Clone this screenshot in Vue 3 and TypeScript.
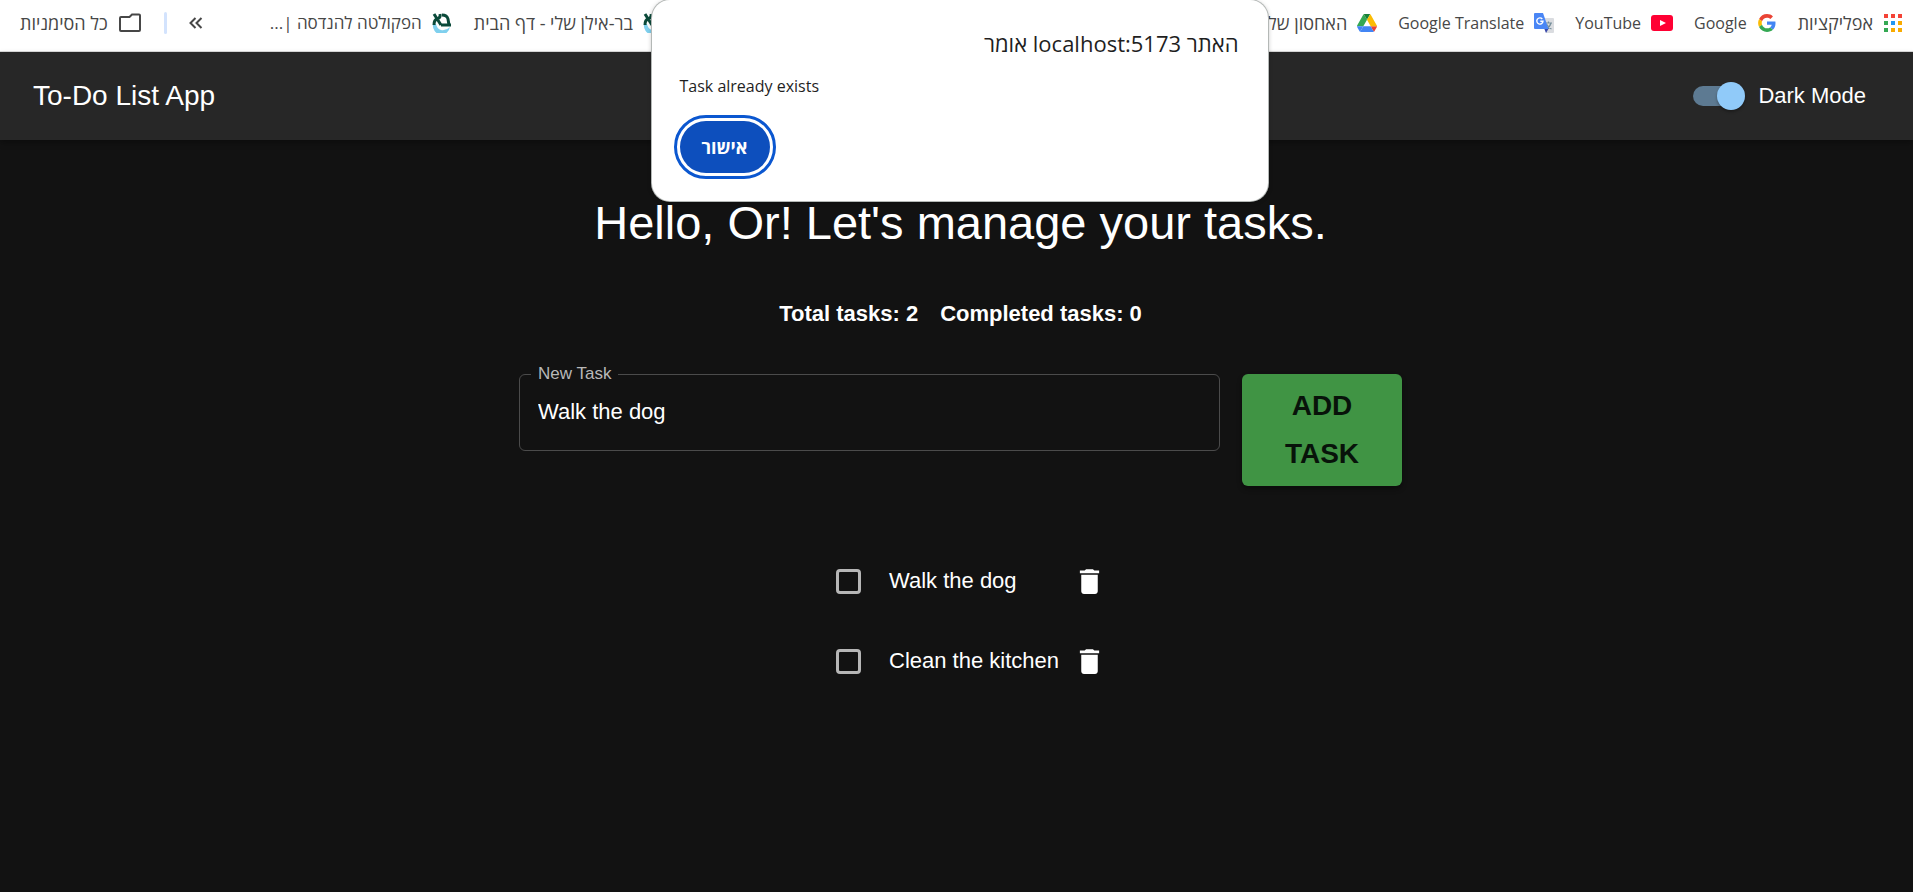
<script setup lang="ts">
import { computed, ref } from 'vue'

interface Bookmark {
  label: string
  icon: 'apps' | 'google' | 'youtube' | 'translate' | 'drive' | 'biu'
  size?: 'hebrew' | 'long'
}

interface Task {
  id: number
  title: string
  done: boolean
}

const pinned: Bookmark[] = [
  { label: 'אפליקציות', icon: 'apps', size: 'hebrew' },
  { label: 'Google', icon: 'google' },
  { label: 'YouTube', icon: 'youtube' },
  { label: 'Google Translate', icon: 'translate' },
  { label: 'האחסון שלי', icon: 'drive', size: 'hebrew' },
]

const university: Bookmark[] = [
  { label: 'בר-אילן שלי - דף הבית', icon: 'biu', size: 'hebrew' },
  { label: 'הפקולטה להנדסה |...', icon: 'biu', size: 'long' },
]

const groups = [pinned, university]

const appCells = ['#f44336', '#f44336', '#f44336', '#34a853', '#2196f3', '#f9ab00', '#34a853', '#f9ab00', '#f9ab00']

const darkMode = ref(true)
const newTask = ref('Walk the dog')
const alertOpen = ref(true)
const tasks = ref<Task[]>([
  { id: 1, title: 'Walk the dog', done: false },
  { id: 2, title: 'Clean the kitchen', done: false },
])

const completed = computed(() => tasks.value.filter((t) => t.done).length)

function addTask() {
  const title = newTask.value.trim()
  if (!title) return
  if (tasks.value.some((t) => t.title === title)) {
    alertOpen.value = true
    return
  }
  tasks.value.push({ id: Date.now(), title, done: false })
  newTask.value = ''
}

function removeTask(id: number) {
  tasks.value = tasks.value.filter((t) => t.id !== id)
}
</script>

<template>
  <div class="screen">
    <nav class="bookmarks" dir="rtl">
      <template v-for="(group, g) in groups" :key="g">
        <div class="group">
          <a v-for="b in group" :key="b.label" class="bookmark" :class="b.size" href="#">
            <svg v-if="b.icon === 'apps'" class="icon" viewBox="0 0 20 20">
              <rect
                v-for="(c, i) in appCells"
                :key="i"
                :x="1 + (i % 3) * 7"
                :y="1 + Math.floor(i / 3) * 7"
                width="4"
                height="4"
                :fill="c"
              />
            </svg>
            <svg v-else-if="b.icon === 'google'" class="icon" viewBox="-3 -3 54 54">
              <path fill="#ea4335" d="M24 9.5c3.54 0 6.71 1.22 9.21 3.6l6.85-6.85C35.9 2.38 30.47 0 24 0 14.62 0 6.51 5.38 2.56 13.22l7.98 6.19C12.43 13.72 17.74 9.5 24 9.5z" />
              <path fill="#4285f4" d="M46.98 24.55c0-1.57-.15-3.09-.38-4.55H24v9.02h12.94c-.58 2.96-2.26 5.48-4.78 7.18l7.73 6c4.51-4.18 7.09-10.36 7.09-17.65z" />
              <path fill="#fbbc05" d="M10.53 28.59c-.48-1.45-.76-2.99-.76-4.59s.27-3.14.76-4.59l-7.98-6.19C.92 16.46 0 20.12 0 24c0 3.88.92 7.54 2.56 10.78l7.97-6.19z" />
              <path fill="#34a853" d="M24 48c6.48 0 11.93-2.13 15.89-5.81l-7.73-6c-2.15 1.45-4.92 2.3-8.16 2.3-6.26 0-11.57-4.22-13.47-9.91l-7.98 6.19C6.51 42.62 14.62 48 24 48z" />
            </svg>
            <svg v-else-if="b.icon === 'youtube'" class="icon wide" viewBox="0 0 22 20">
              <rect y="2" width="22" height="16" rx="3" fill="#ff0033" />
              <path d="M9 7v6l6-3z" fill="#fff" />
            </svg>
            <svg v-else-if="b.icon === 'translate'" class="icon" viewBox="0 0 20 20">
              <path d="M8 5h11q1 0 1 1v13q0 1-1 1h-7z" fill="#dadce0" />
              <path d="M11 10h7M14.500 8.500v1.500M17 10q-1 4-5 6M13 11.500q1 3 4.500 4.500" fill="none" stroke="#78909c" stroke-width="1.200" />
              <path d="M10 15h5l-3 5z" fill="#3949ab" />
              <path d="M1 0h8l5.500 16H1q-1 0-1-1V1q0-1 1-1z" fill="#4a86f5" />
              <path d="M8.300 6A3.100 3.100 0 1 0 9 8.300H6.300" fill="none" stroke="#fff" stroke-width="1.400" />
            </svg>
            <svg v-else-if="b.icon === 'drive'" class="icon" viewBox="0 0 87.3 78">
              <path d="M43.650 25 29.900 1.200c-1.350.8-2.500 1.900-3.300 3.300L1.200 48.500C.4 49.900 0 51.450 0 53h27.500z" fill="#34a853" />
              <path d="M73.550 76.800c1.350-.8 2.500-1.900 3.300-3.300l1.600-2.750L86.100 57.500c.8-1.400 1.200-2.950 1.200-4.500H59.800l5.850 11.500z" fill="#ea4335" />
              <path d="M43.650 25 57.400 1.200C56.050.4 54.500 0 52.900 0H34.400c-1.600 0-3.150.45-4.500 1.200z" fill="#188038" />
              <path d="m6.600 66.850 3.850 6.650c.8 1.400 1.950 2.500 3.300 3.300L27.500 53H0c0 1.550.4 3.100 1.200 4.500z" fill="#4285f4" />
              <path d="M59.800 53H27.500L13.750 76.800c1.350.8 2.900 1.200 4.500 1.200h50.800c1.600 0 3.150-.45 4.500-1.200z" fill="#4285f4" />
              <path d="M73.400 26.500 60.700 4.500c-.8-1.400-1.950-2.500-3.300-3.300L43.650 25 59.800 53h27.450c0-1.550-.4-3.100-1.200-4.500z" fill="#fbbc04" />
            </svg>
            <svg v-else class="icon" viewBox="0 0 20 20">
              <path d="M1 11a8.500 9 0 0 0 17 3q-4 4-9 3-4-1-5-6z" fill="#7fd0ee" />
              <path d="M2 1l7 11M8 1q1 4-3 5-3 1-3 6M10 2q5 0 6 4l1 6M9 12h10" fill="none" stroke="#0b4a3a" stroke-width="3" />
            </svg>
            <span>{{ b.label }}</span>
          </a>
          <template v-if="g === 1">
            <button class="more" type="button" aria-label="עוד סימניות">
              <svg viewBox="0 0 14 12">
                <path d="M6.500 1l-5 5 5 5M12.500 1l-5 5 5 5" fill="none" stroke="#474747" stroke-width="2" />
              </svg>
            </button>
            <span class="divider"></span>
            <a class="bookmark hebrew" href="#">
              <svg class="folder" viewBox="0 0 24 20">
                <path d="M2 17V5q0-1 1-1h8.500l2.500-2.500h7q1 0 1 1V17q0 1-1 1H3q-1 0-1-1z" fill="none" stroke="#474747" stroke-width="2" />
              </svg>
              <span>כל הסימניות</span>
            </a>
          </template>
        </div>
      </template>
    </nav>

    <header class="app-bar">
      <h1>To-Do List App</h1>
      <label class="mode">
        <input v-model="darkMode" class="switch" type="checkbox" role="switch" />
        <span>Dark Mode</span>
      </label>
    </header>

    <main class="content">
      <h2>Hello, Or! Let's manage your tasks.</h2>
      <div class="stats">
        <span>Total tasks: {{ tasks.length }}</span>
        <span>Completed tasks: {{ completed }}</span>
      </div>

      <form class="entry" @submit.prevent="addTask">
        <fieldset class="field">
          <legend><label for="new-task">New Task</label></legend>
          <input id="new-task" v-model="newTask" type="text" autocomplete="off" />
        </fieldset>
        <button class="add" type="submit">Add Task</button>
      </form>

      <ul class="tasks">
        <li v-for="t in tasks" :key="t.id">
          <input :id="`task-${t.id}`" v-model="t.done" class="tick" type="checkbox" />
          <label :for="`task-${t.id}`">{{ t.title }}</label>
          <button class="remove" type="button" :aria-label="`Delete ${t.title}`" @click="removeTask(t.id)">
            <svg viewBox="0 0 24 24">
              <path d="M6 19c0 1.100.9 2 2 2h8c1.100 0 2-.9 2-2V7H6zM19 4h-3.500l-1-1h-5l-1 1H5v2h14z" fill="#fff" />
            </svg>
          </button>
        </li>
      </ul>
    </main>

    <div v-if="alertOpen" class="overlay">
      <section class="alert" dir="rtl" role="alertdialog" aria-labelledby="alert-title" aria-describedby="alert-text">
        <h3 id="alert-title">האתר localhost:5173 אומר</h3>
        <p id="alert-text" dir="ltr">Task already exists</p>
        <button class="ok" type="button" @click="alertOpen = false">אישור</button>
      </section>
    </div>
  </div>
</template>

<style>
body {
  margin: 0;
  background: #121212;
}
</style>

<style scoped>
.screen {
  position: relative;
  min-height: 100vh;
  background: #121212;
  color: #fff;
  font-family: 'Liberation Sans', Arial, sans-serif;
  font-size: 22px;
  line-height: 32px;
}

.bookmarks {
  display: flex;
  justify-content: space-between;
  box-sizing: border-box;
  height: 52px;
  padding: 0 10px 6px 20px;
  overflow: hidden;
  border-bottom: 1px solid #dcdcdc;
  background: #fff;
  font-family: 'Open Sans', 'Noto Sans', sans-serif;
  font-size: 16px;
  line-height: 24px;
  white-space: nowrap;
}

.group {
  display: flex;
  align-items: center;
  gap: 22px;
}

.group:first-child {
  gap: 21px;
}

.bookmark {
  display: flex;
  align-items: center;
  gap: 10px;
  color: #474747;
  text-decoration: none;
}

.hebrew {
  font-size: 18px;
}

.long {
  font-size: 17px;
}

.icon {
  flex: none;
  width: 20px;
  height: 20px;
}

.wide {
  width: 22px;
}

.folder {
  flex: none;
  width: 24px;
  height: 20px;
}

.more {
  display: flex;
  margin: 0 45px 0 0;
  padding: 0;
  border: 0;
  background: none;
}

.more svg {
  width: 14px;
  height: 12px;
}

.divider {
  width: 3px;
  height: 22px;
  border-radius: 2px;
  background: #d3e3fd;
}

.app-bar {
  display: flex;
  align-items: center;
  justify-content: space-between;
  height: 88px;
  padding: 0 47px 0 33px;
  background: #272727;
  box-shadow: 0 3px 6px rgba(0, 0, 0, 0.3);
}

h1 {
  margin: 0;
  font-size: 28px;
  font-weight: 400;
  line-height: 44px;
}

.mode {
  display: flex;
  align-items: center;
  gap: 18px;
}

.switch {
  display: flex;
  align-items: center;
  justify-content: flex-end;
  width: 47px;
  height: 20px;
  margin: 0;
  appearance: none;
  border-radius: 10px;
  background: #5d7a92;
}

.switch::before {
  content: '';
  flex: none;
  width: 28px;
  height: 28px;
  margin-right: -5px;
  border-radius: 50%;
  background: #90caf9;
  box-shadow: 0 2px 3px rgba(0, 0, 0, 0.3);
}

.switch:not(:checked) {
  justify-content: flex-start;
}

.content {
  display: flex;
  flex-direction: column;
  align-items: center;
  padding: 55px 0 0 8px;
}

h2 {
  margin: 0;
  font-size: 47px;
  font-weight: 400;
  line-height: 56px;
}

.stats {
  display: flex;
  gap: 22px;
  margin-top: 47px;
  font-weight: 700;
}

.entry {
  display: flex;
  align-items: flex-start;
  gap: 22px;
  width: 100%;
  max-width: 883px;
  margin-top: 35px;
}

.field {
  flex: 1;
  box-sizing: border-box;
  min-width: 0;
  height: 86px;
  margin: 0;
  padding: 0 18px;
  border: 1px solid #4b4b4b;
  border-radius: 6px;
}

.field legend {
  margin-left: -7px;
  padding: 0 7px;
  color: #b8b8b8;
  font-size: 17px;
  line-height: 18px;
}

.field legend label {
  display: block;
}

.field input {
  display: block;
  width: 100%;
  padding: 13px 0;
  border: 0;
  outline: 0;
  background: none;
  color: #fff;
  font: inherit;
}

.add {
  width: 160px;
  margin-top: 9px;
  padding: 8px 30px;
  border: 0;
  border-radius: 6px;
  background: #409444;
  box-shadow: 0 3px 5px rgba(0, 0, 0, 0.4);
  color: #08130a;
  font-family: inherit;
  font-size: 28px;
  font-weight: 700;
  line-height: 48px;
  text-transform: uppercase;
}

.tasks {
  display: flex;
  flex-direction: column;
  margin: 55px 0 0;
  padding: 0;
  list-style: none;
}

.tasks li {
  display: flex;
  align-items: center;
  height: 80px;
  padding: 0 18px 0 39px;
}

.tasks label {
  flex: 1;
  padding: 0 14px 0 28px;
}

.tick {
  width: 25px;
  height: 25px;
  margin: 0;
  border: 3px solid #b6b6b6;
  border-radius: 4px;
  appearance: none;
}

.tick:checked {
  background: #90caf9;
}

.remove {
  display: flex;
  padding: 0;
  border: 0;
  background: none;
}

.remove svg {
  width: 33px;
  height: 33px;
}

.overlay {
  position: absolute;
  top: 0;
  left: 6px;
  right: 0;
  display: flex;
  justify-content: center;
}

.alert {
  display: flex;
  flex-direction: column;
  box-sizing: border-box;
  width: 616px;
  padding: 27px 29px 28px 28px;
  border-radius: 18px;
  background: #fff;
  box-shadow: 0 0 0 1px #b4b8b6, 0 1px 5px rgba(0, 0, 0, 0.3);
  color: #1f1f1f;
  font-family: 'Open Sans', 'Noto Sans', sans-serif;
  font-size: 16px;
}

.alert h3 {
  margin: 0;
  font-size: 22px;
  font-weight: 400;
  line-height: 32px;
}

.alert p {
  margin: 11px 0 0;
  line-height: 32px;
}

.ok {
  align-self: flex-end;
  width: 90px;
  height: 52px;
  margin-top: 19px;
  padding: 0;
  border: 0;
  border-radius: 26px;
  outline: 3px solid #0b57d0;
  outline-offset: 3px;
  background: #0d4fbd;
  color: #fff;
  font-family: inherit;
  font-size: 18px;
  font-weight: 700;
}
</style>
